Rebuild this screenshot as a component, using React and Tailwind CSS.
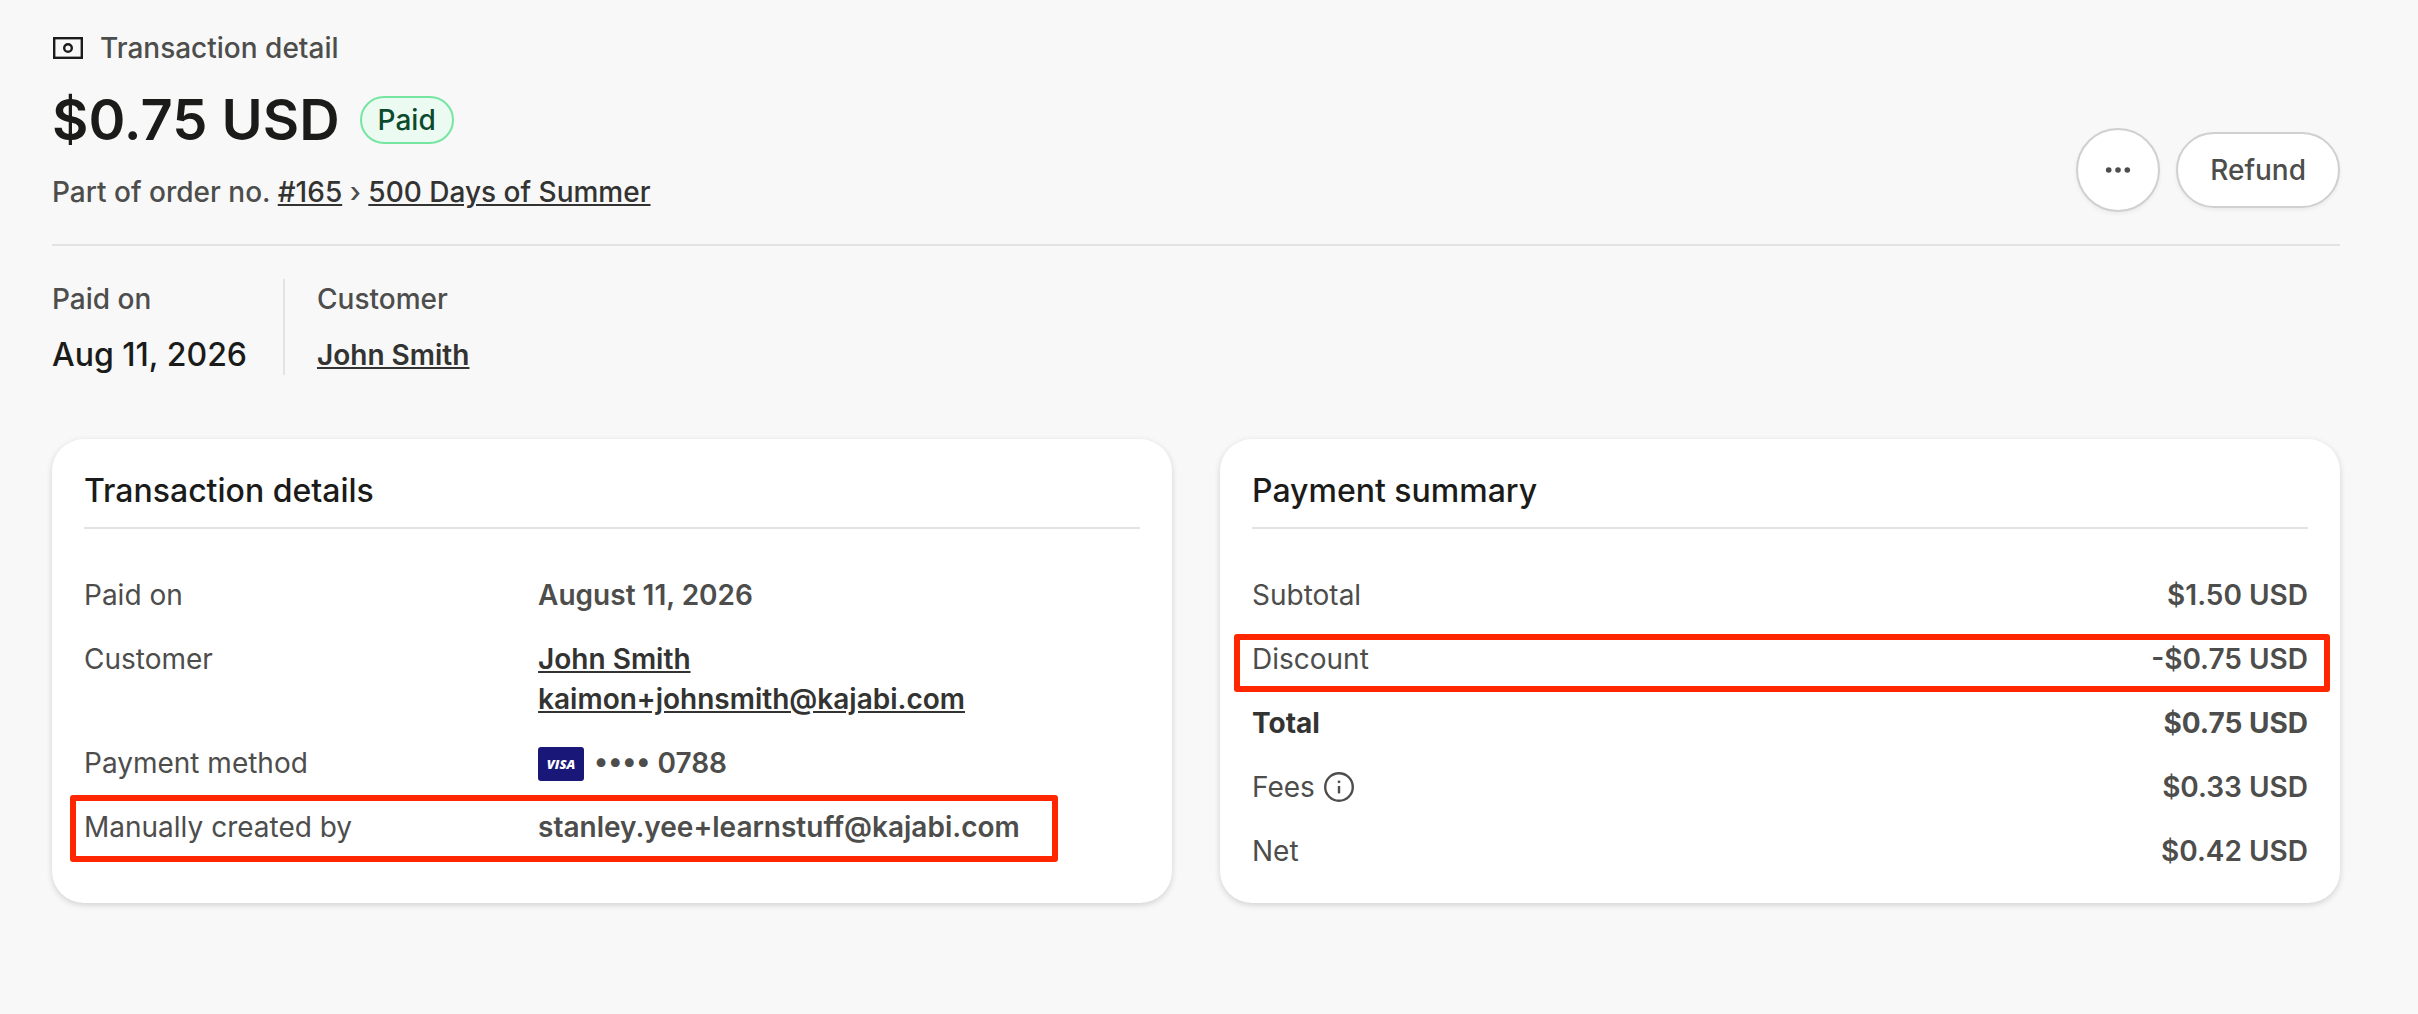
import { clsx } from "clsx";

const transactionRows = [
  { label: "Paid on", value: "August 11, 2026" },
  { label: "Customer", links: ["John Smith", "kaimon+johnsmith@kajabi.com"] },
  { label: "Payment method", card: "•••• 0788" },
  { label: "Manually created by", value: "stanley.yee+learnstuff@kajabi.com", marked: true },
];

const summaryRows = [
  { label: "Subtotal", value: "$1.50 USD" },
  { label: "Discount", value: "-$0.75 USD", marked: true },
  { label: "Total", value: "$0.75 USD", strong: true },
  { label: "Fees", value: "$0.33 USD", info: true },
  { label: "Net", value: "$0.42 USD" },
];

const CashIcon = () => (
  <svg width="32" height="32" viewBox="0 0 32 32" fill="none" stroke="#1b1b1a" aria-hidden="true">
    <rect x="2.2" y="6.2" width="27.6" height="19.6" strokeWidth="2.4" />
    <circle cx="16" cy="16" r="3.8" strokeWidth="2.4" />
  </svg>
);

const DotsIcon = () => (
  <svg width="32" height="32" viewBox="0 0 32 32" fill="currentColor" aria-hidden="true">
    <circle cx="6.7" cy="16" r="2.8" />
    <circle cx="16" cy="16" r="2.8" />
    <circle cx="25.3" cy="16" r="2.8" />
  </svg>
);

const InfoIcon = () => (
  <svg width="32" height="32" viewBox="0 0 32 32" fill="none" stroke="currentColor" aria-hidden="true">
    <circle cx="16" cy="16" r="13.8" strokeWidth="2.4" />
    <path d="M16 15v7.4" strokeWidth="2.4" />
    <circle cx="16" cy="10.8" r="1.4" fill="currentColor" stroke="none" />
  </svg>
);

const VisaBadge = () => (
  <span className="mt-0.5 flex h-[34px] w-[46px] items-center justify-center rounded-[3px] bg-[#191777] font-['Open_Sans',sans-serif] text-[13px] leading-none font-extrabold text-white italic">
    VISA
  </span>
);

/**
 * Red outline that calls out a row
 */
const Marker = ({ className }) => (
  <span
    aria-hidden="true"
    className={clsx("pointer-events-none absolute rounded-[3px] border-6 border-[#ff2600]", className)}
  />
);

const TextLink = ({ children, className }) => (
  <a href="#" className={clsx("text-[#333332] underline", className)}>
    {children}
  </a>
);

const Card = ({ title, children }) => (
  <section className="flex-1 rounded-[32px] bg-white p-8 shadow-[0_2px_6px_rgba(0,0,0,0.16)]">
    <h2 className="border-b-2 border-[#e3e3e3] pb-4 text-[32px] leading-10 font-medium text-[#1b1b1a]">
      {title}
    </h2>
    <dl className="mt-[46px] flex flex-col gap-6">{children}</dl>
  </section>
);

const TransactionRow = ({ label, value, links, card, marked }) => (
  <div className="relative flex">
    <dt className="w-[43%] shrink-0">{label}</dt>
    <dd className="font-semibold">
      {value}
      {links?.map((link) => (
        <div key={link}>
          <TextLink>{link}</TextLink>
        </div>
      ))}
      {card && (
        <span className="flex h-10 items-center gap-2.5">
          <VisaBadge />
          {card}
        </span>
      )}
    </dd>
    {marked && <Marker className="-top-3 right-[82px] -bottom-[15px] -left-3.5" />}
  </div>
);

const SummaryRow = ({ label, value, strong, info, marked }) => (
  <div className="relative flex justify-between">
    <dt className={clsx("flex items-center gap-2", strong && "font-bold text-[#333332]")}>
      {label}
      {info && (
        <button type="button" aria-label="About fees">
          <InfoIcon />
        </button>
      )}
    </dt>
    <dd className={strong ? "font-bold" : "font-semibold"}>{value}</dd>
    {marked && <Marker className="-top-[5px] -right-[22px] -bottom-[13px] -left-[18px]" />}
  </div>
);

export default function App() {
  return (
    <main className="min-h-screen bg-[#f8f8f8] pt-7 pr-[78px] pb-28 pl-[52px] font-['Inter',sans-serif] text-[28px] leading-10 text-[#4d4d4c]">
      <header className="flex items-end justify-between border-b-2 border-[#e3e3e3] pb-8 font-medium">
        <div>
          <div className="flex items-center gap-4">
            <CashIcon />
            Transaction detail
          </div>
          <div className="my-4 flex items-center gap-5">
            <h1 className="text-[56px] leading-[72px] font-semibold text-[#1b1b1a]">$0.75 USD</h1>
            <span className="rounded-full border-2 border-[#77e5a2] bg-[#ebfbf2] px-4 leading-[44px] text-[#0b4a2c]">
              Paid
            </span>
          </div>
          <p>
            Part of order no. <TextLink>#165</TextLink> › <TextLink>500 Days of Summer</TextLink>
          </p>
        </div>
        <div className="flex items-center gap-4">
          <button
            type="button"
            aria-label="More actions"
            className="flex size-[84px] items-center justify-center rounded-full border-2 border-[#d0d0d0] bg-white shadow-[0_2px_4px_rgba(0,0,0,0.06)]"
          >
            <DotsIcon />
          </button>
          <button
            type="button"
            className="h-[76px] rounded-full border-2 border-[#d0d0d0] bg-white px-8 shadow-[0_2px_4px_rgba(0,0,0,0.06)]"
          >
            Refund
          </button>
        </div>
      </header>

      <dl className="mt-[33px] mb-16 flex font-medium">
        <div className="pr-9">
          <dt>Paid on</dt>
          <dd className="mt-4 text-[32px] text-[#1b1b1a]">Aug 11, 2026</dd>
        </div>
        <div className="border-l-2 border-[#e3e3e3] pl-8">
          <dt>Customer</dt>
          <dd className="mt-4">
            <TextLink className="font-semibold">John Smith</TextLink>
          </dd>
        </div>
      </dl>

      <div className="flex gap-12">
        <Card title="Transaction details">
          {transactionRows.map((row) => (
            <TransactionRow key={row.label} {...row} />
          ))}
        </Card>
        <Card title="Payment summary">
          {summaryRows.map((row) => (
            <SummaryRow key={row.label} {...row} />
          ))}
        </Card>
      </div>
    </main>
  );
}
